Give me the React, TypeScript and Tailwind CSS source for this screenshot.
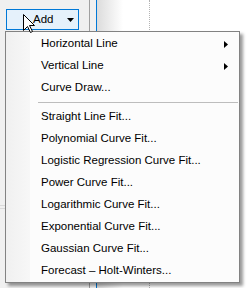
import React from "react";

type MenuItem = { label: string; sub?: boolean } | "sep";

const items: MenuItem[] = [
  { label: "Horizontal Line", sub: true },
  { label: "Vertical Line", sub: true },
  { label: "Curve Draw..." },
  "sep",
  { label: "Straight Line Fit..." },
  { label: "Polynomial Curve Fit..." },
  { label: "Logistic Regression Curve Fit..." },
  { label: "Power Curve Fit..." },
  { label: "Logarithmic Curve Fit..." },
  { label: "Exponential Curve Fit..." },
  { label: "Gaussian Curve Fit..." },
  { label: "Forecast \u2013 Holt-Winters..." },
];

function SubArrow() {
  return (
    <svg width="4" height="7" viewBox="0 0 4 7" className="block">
      <polygon points="0,0 4,3.5 0,7" fill="#000" />
    </svg>
  );
}

function Cursor() {
  return (
    <svg width="13" height="20" viewBox="0 0 13 20" className="absolute left-[23px] top-[14px]">
      <polygon
        points="0.5,0.5 0.5,16.5 4.5,12.5 7.5,18.5 9.5,17.5 6.5,11.5 11.5,11.5"
        fill="#fff"
        stroke="#000"
        strokeWidth="1"
        strokeLinejoin="miter"
      />
    </svg>
  );
}

function ContextMenu() {
  return (
    <div className="absolute left-[5px] top-[31px] w-[235px] border border-[#828282] bg-[#fcfcfc] pt-px shadow-[3px_3px_3px_rgba(0,0,0,0.4)]">
      <div className="absolute left-0 top-0 bottom-0 w-[24px] bg-gradient-to-r from-[#f0f0f0] to-[#f7f7f7]" />
      <div className="relative">
        {items.map((item, i) =>
          item === "sep" ? (
            <div key={i} className="h-[7px] pt-[3px] pl-[32px] pr-px">
              <div className="h-px bg-[#bdbdbd]" />
            </div>
          ) : (
            <div key={i} className="flex h-[22px] items-center justify-between pl-[35px] pr-[11px] text-[11.5px] text-[#000]">
              <span>{item.label}</span>
              {item.sub && <SubArrow />}
            </div>
          )
        )}
      </div>
    </div>
  );
}

export default function App() {
  return (
    <div
      className="relative h-[288px] w-[250px] overflow-hidden bg-white"
      style={{ fontFamily: '"Liberation Sans", Arial, sans-serif' }}
    >
      <div className="flex h-full">
        <div className="w-[89px] bg-[#f0f0f0] pl-[6px] pt-[9px]">
          <button className="flex h-[21px] w-[73px] items-center border border-[#0078d7] bg-[#e5f1fb] pl-[26px] text-[11.5px] text-[#000]">
            <span>Add</span>
            <svg width="7" height="4" viewBox="0 0 7 4" className="ml-[14px] block">
              <polygon points="0,0 7,0 3.5,4" fill="#000" />
            </svg>
          </button>
          <div className="mt-[175px] -ml-[6px] w-[6px]">
            <div className="h-px bg-[#d9d9d9]" />
            <div className="mt-[2px] h-px bg-[#d9d9d9]" />
          </div>
        </div>
        <div className="w-px bg-[#a0a0a0]" />
        <div className="w-[6px] bg-[#f0f0f0]" />
        <div className="w-px bg-[#0078d7]" />
        <div className="w-[52px] bg-gradient-to-r from-[#dcdcdc] via-white via-50% to-white" />
        <div className="w-px border-l border-dotted border-[#b4b4b4]" />
        <div className="flex-1 bg-white" />
      </div>
      <ContextMenu />
      <Cursor />
    </div>
  );
}
